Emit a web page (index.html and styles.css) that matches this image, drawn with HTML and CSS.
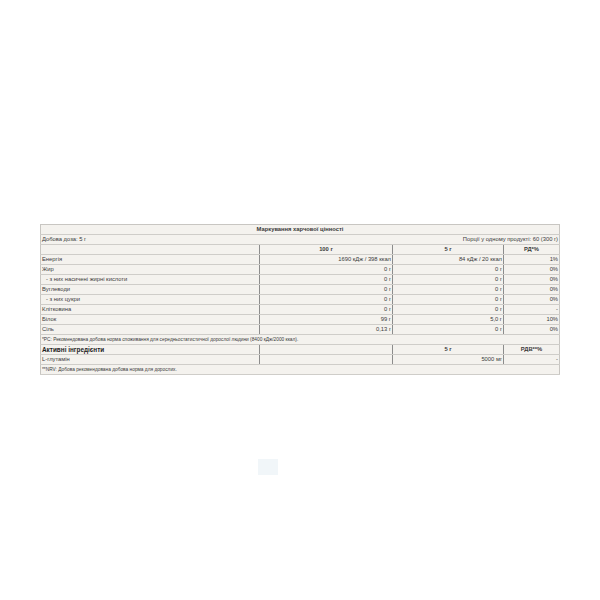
FILE: index.html
```html
<!DOCTYPE html>
<html lang="uk">
<head>
<meta charset="utf-8">
<link rel="stylesheet" href="styles.css">
</head>
<body>
<div class="page">
  <table class="nutri">
    <colgroup>
      <col class="c1"><col class="c2"><col class="c3"><col class="c4">
    </colgroup>
    <tr><td colspan="4" class="title">Маркування харчової цінності</td></tr>
    <tr class="noline"><td colspan="2">Добова доза: 5 г</td><td colspan="2" class="r">Порції у одному продукті: 60 (300 г)</td></tr>
    <tr class="grid"><td></td><td class="hd">100 г</td><td class="hd">5 г</td><td class="hd">РД*%</td></tr>
    <tr class="grid"><td>Енергія</td><td class="r">1690 кДж / 398 ккал</td><td class="r">84 кДж / 20 ккал</td><td class="r">1%</td></tr>
    <tr class="grid"><td>Жир</td><td class="r">0 г</td><td class="r">0 г</td><td class="r">0%</td></tr>
    <tr class="grid"><td class="ind">- з них насичені жирні кислоти</td><td class="r">0 г</td><td class="r">0 г</td><td class="r">0%</td></tr>
    <tr class="grid"><td>Вуглеводи</td><td class="r">0 г</td><td class="r">0 г</td><td class="r">0%</td></tr>
    <tr class="grid"><td class="ind">- з них цукри</td><td class="r">0 г</td><td class="r">0 г</td><td class="r">0%</td></tr>
    <tr class="grid"><td>Клітковина</td><td class="r">0 г</td><td class="r">0 г</td><td class="r">-</td></tr>
    <tr class="grid"><td>Білок</td><td class="r">99 г</td><td class="r">5,0 г</td><td class="r">10%</td></tr>
    <tr class="grid"><td>Сіль</td><td class="r">0,13 г</td><td class="r">0 г</td><td class="r">0%</td></tr>
    <tr><td colspan="4" class="note">*РС: Рекомендована добова норма споживання для середньостатистичної дорослої людини (8400 кДж/2000 ккал).</td></tr>
    <tr class="grid"><td class="act">Активні інгредієнти</td><td></td><td class="hd">5 г</td><td class="hd">РДВ**%</td></tr>
    <tr class="grid"><td>L-глутамін</td><td></td><td class="r">5000 мг</td><td class="r">-</td></tr>
    <tr><td colspan="4" class="note">**NRV: Добова рекомендована добова норма для дорослих.</td></tr>
  </table>
  <div class="square"></div>
</div>
</body>
</html>
```
FILE: styles.css
```css
html, body {
  margin: 0;
  padding: 0;
  background: #ffffff;
}
.page {
  padding: 224px 0 0 40px;
  font-family: "Liberation Sans", Arial, sans-serif;
}
.nutri {
  width: 519px;
  table-layout: fixed;
  border-collapse: collapse;
  background: #f4f2ee;
  border: 1px solid #c8c6c2;
  color: #3a3a3a;
  font-size: 5.8px;
}
.c1 { width: 219px; }
.c2 { width: 133px; }
.c3 { width: 111px; }
.c4 { width: 56px; }
.nutri td {
  height: 9px;
  padding: 0 1px;
  border-bottom: 1px solid #cfcdc9;
  white-space: nowrap;
  overflow: hidden;
  line-height: 9px;
}
.grid td {
  border-right: 1px solid #8c8c8c;
}
.grid td:last-child {
  border-right: none;
}
.title {
  text-align: center;
  font-weight: bold;
}
.r { text-align: right; }
.hd {
  text-align: center;
  font-weight: bold;
}
.ind { padding-left: 5px !important; }
.note { font-size: 4.8px; }
.act {
  font-weight: bold;
  font-size: 6.4px;
  color: #222;
}
.square {
  width: 20px;
  height: 16px;
  margin: 84px 0 0 218px;
  background: #f1f6f9;
}
```
